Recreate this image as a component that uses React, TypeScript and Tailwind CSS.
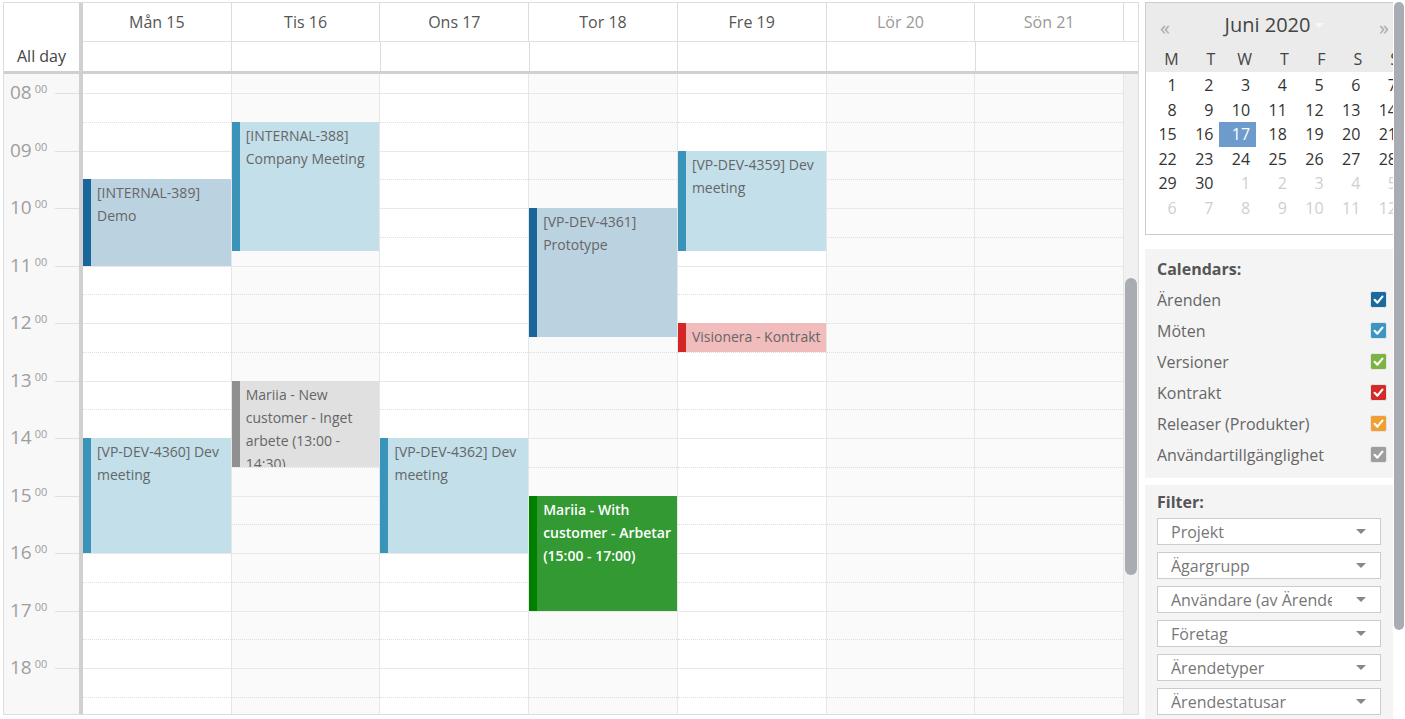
import React from 'react';

type Kind = 'arende' | 'mote' | 'kontrakt' | 'tillg' | 'arbete';

interface CalEvent {
    start: number;
    end: number;
    kind: Kind;
    title: string;
}

interface Day {
    label: string;
    shade: boolean;
    weekend: boolean;
    events: CalEvent[];
}

// px per hour and the offset of 08:00 inside the scrolled body
const HOUR = 57.5;
const ORIGIN = 19;

const kindStyle: Record<Kind, string> = {
    arende: 'bg-[#bbd2e0] border-[#19679a] text-[#666]',
    mote: 'bg-[#c2dfea] border-[#3a94b9] text-[#666]',
    kontrakt: 'bg-[#f1bcbc] border-[#d42626] text-[#666]',
    tillg: 'bg-[#e0e0e0] border-[#909090] text-[#666]',
    arbete: 'bg-[#339933] border-[#008000] text-white font-semibold',
};

const days: Day[] = [
    {
        label: 'Mån 15', shade: false, weekend: false, events: [
            { start: 9.5, end: 11, kind: 'arende', title: '[INTERNAL-389] Demo' },
            { start: 14, end: 16, kind: 'mote', title: '[VP-DEV-4360] Dev meeting' },
        ],
    },
    {
        label: 'Tis 16', shade: true, weekend: false, events: [
            { start: 8.5, end: 10.75, kind: 'mote', title: '[INTERNAL-388] Company Meeting' },
            { start: 13, end: 14.5, kind: 'tillg', title: 'Mariia - New customer - Inget arbete (13:00 - 14:30)' },
        ],
    },
    {
        label: 'Ons 17', shade: false, weekend: false, events: [
            { start: 14, end: 16, kind: 'mote', title: '[VP-DEV-4362] Dev meeting' },
        ],
    },
    {
        label: 'Tor 18', shade: true, weekend: false, events: [
            { start: 10, end: 12.25, kind: 'arende', title: '[VP-DEV-4361] Prototype' },
            { start: 15, end: 17, kind: 'arbete', title: 'Mariia - With customer - Arbetar (15:00 - 17:00)' },
        ],
    },
    {
        label: 'Fre 19', shade: false, weekend: false, events: [
            { start: 9, end: 10.75, kind: 'mote', title: '[VP-DEV-4359] Dev meeting' },
            { start: 12, end: 12.5, kind: 'kontrakt', title: 'Visionera - Kontrakt' },
        ],
    },
    { label: 'Lör 20', shade: true, weekend: true, events: [] },
    { label: 'Sön 21', shade: true, weekend: true, events: [] },
];

// half-hour slots starting 07:30, enough to fill the visible body
const slots = Array.from({ length: 23 }, (_, i) => 7.5 + i * 0.5);

function SlotLines() {
    return (
        <div className="mt-[-9.75px]">
            {slots.map((t) => (
                <div
                    key={t}
                    className={`h-[28.75px] border-t ${Number.isInteger(t) ? 'border-solid border-[#e8e8e8]' : 'border-dotted border-[#dedede]'}`}
                />
            ))}
        </div>
    );
}

function DayColumn({ day }: { day: Day }) {
    return (
        <div className={`relative flex-1 overflow-hidden border-r border-[#e6e6e6] ${day.shade ? 'bg-[#fafafa]' : 'bg-white'}`}>
            <SlotLines />
            {day.events.map((ev) => (
                <div
                    key={ev.title}
                    className={`absolute left-0 right-0 overflow-hidden border-l-8 pl-[6px] pr-[2px] pt-[2px] text-[14px] leading-[23px] ${kindStyle[ev.kind]}`}
                    style={{ top: ORIGIN + (ev.start - 8) * HOUR, height: (ev.end - ev.start) * HOUR }}
                >
                    {ev.title}
                </div>
            ))}
        </div>
    );
}

function TimeGutter() {
    return (
        <div className="w-[79px] shrink-0 overflow-hidden border-r-4 border-[#d0d0d0] bg-[#f8f8f8]">
            <div className="mt-[-9.75px]">
                {slots.map((t) => (
                    <div key={t} className="relative h-[28.75px]">
                        {Number.isInteger(t) && (
                            <>
                                <div className="ml-[51px] border-t border-[#e0e0e0]" />
                                <div className="absolute left-[6px] top-[-12px] flex items-start text-[#9e9e9e]">
                                    <span className="text-[19px] leading-[22px]">{String(t).padStart(2, '0')}</span>
                                    <span className="ml-[3px] mt-[1px] text-[11px] leading-[14px]">00</span>
                                </div>
                            </>
                        )}
                    </div>
                ))}
            </div>
        </div>
    );
}

function WeekCalendar() {
    return (
        <div className="ml-[3px] mt-[2px] flex h-[713px] w-[1136px] shrink-0 flex-col border border-[#dddddd] bg-white">
            <div className="flex border-b-[3px] border-[#d0d0d0]">
                <div className="flex h-[68px] w-[79px] shrink-0 items-end justify-center border-r-4 border-[#d0d0d0] pb-[3px] text-[16px] leading-[24px] text-[#444]">
                    All day
                </div>
                <div className="flex flex-1 flex-col">
                    <div className="flex h-[39px] border-b border-[#e0e0e0]">
                        {days.map((d) => (
                            <div
                                key={d.label}
                                className={`flex flex-1 items-center justify-center border-r border-[#dddddd] text-[16px] ${d.weekend ? 'text-[#999]' : 'text-[#555]'}`}
                            >
                                {d.label}
                            </div>
                        ))}
                        <div className="w-[14px]" />
                    </div>
                    <div className="flex h-[29px]">
                        {days.map((d, i) => (
                            <div key={d.label} className={`flex-1 ${i < days.length - 1 ? 'border-r border-[#dddddd]' : ''}`} />
                        ))}
                        <div className="w-[14px]" />
                    </div>
                </div>
            </div>
            <div className="flex min-h-0 flex-1 overflow-hidden">
                <TimeGutter />
                <div className="flex flex-1">
                    {days.map((d) => (
                        <DayColumn key={d.label} day={d} />
                    ))}
                </div>
                <div className="w-[14px] shrink-0 bg-[#f1f1f1]">
                    <div className="ml-[1px] mt-[204px] h-[297px] w-[12px] rounded-full bg-[#a9adb3]" />
                </div>
            </div>
        </div>
    );
}

const weekdays = ['M', 'T', 'W', 'T', 'F', 'S', 'S'];
const monthRows: { n: number; out?: boolean }[][] = [
    [1, 2, 3, 4, 5, 6, 7].map((n) => ({ n })),
    [8, 9, 10, 11, 12, 13, 14].map((n) => ({ n })),
    [15, 16, 17, 18, 19, 20, 21].map((n) => ({ n })),
    [22, 23, 24, 25, 26, 27, 28].map((n) => ({ n })),
    [{ n: 29 }, { n: 30 }, ...[1, 2, 3, 4, 5].map((n) => ({ n, out: true }))],
    [6, 7, 8, 9, 10, 11, 12].map((n) => ({ n, out: true })),
];

function MiniCalendar() {
    return (
        <div className="w-[259px] border border-[#cccccc] bg-white">
            <div className="bg-[#ebebeb]">
                <div className="flex h-[42px] items-center justify-between px-[14px]">
                    <span className="mt-[8px] text-[20px] leading-none text-[#aaa]">«</span>
                    <span className="mt-[2px] flex items-center text-[20px] text-[#444]">
                        Juni 2020
                        <span className="ml-[4px] h-0 w-0 border-x-[5px] border-t-[5px] border-x-transparent border-t-[#f6f6f6]" />
                    </span>
                    <span className="mt-[8px] text-[20px] leading-none text-[#aaa]">»</span>
                </div>
                <div className="grid h-[27px] grid-cols-7 items-center text-[16px] text-[#444]">
                    {weekdays.map((w, i) => (
                        <span key={i} className="pr-[4px] text-right">{w}</span>
                    ))}
                </div>
            </div>
            <div className="pb-[14px] pt-[1px]">
                {monthRows.map((row, r) => (
                    <div key={r} className="grid h-[24.5px] grid-cols-7">
                        {row.map((c, i) => {
                            const sel = !c.out && c.n === 17;
                            return (
                                <span
                                    key={i}
                                    className={`flex items-center justify-end pr-[6px] text-[16px] ${sel ? 'bg-[#6d9bcb] text-white' : c.out ? 'text-[#cfcfcf]' : 'text-[#333]'}`}
                                >
                                    {c.n}
                                </span>
                            );
                        })}
                    </div>
                ))}
            </div>
        </div>
    );
}

function Check({ color }: { color: string }) {
    return (
        <svg width="17" height="17" viewBox="0 0 17 17" className="mt-[6px] shrink-0">
            <rect x="0.5" y="0.5" width="16" height="16" rx="2" fill={color} stroke="#e6e6e6" strokeWidth="1" />
            <path d="M4.6 8.8 L7.4 11.6 L12.4 5.6" fill="none" stroke="white" strokeWidth="2.2" strokeLinecap="round" strokeLinejoin="round" />
        </svg>
    );
}

const calendars = [
    { name: 'Ärenden', color: '#1a6aa0' },
    { name: 'Möten', color: '#3b97c2' },
    { name: 'Versioner', color: '#7cb342' },
    { name: 'Kontrakt', color: '#d32a2a' },
    { name: 'Releaser (Produkter)', color: '#f0a030' },
    { name: 'Användartillgänglighet', color: '#9e9e9e' },
];

const filters = ['Projekt', 'Ägargrupp', 'Användare (av Ärendehanterare)', 'Företag', 'Ärendetyper', 'Ärendestatusar'];

function Sidebar() {
    return (
        <div className="ml-[6px] h-full w-[248px] shrink-0 overflow-hidden pt-[2px]">
            <MiniCalendar />
            <div className="mt-[14px] bg-[#f4f4f4] pb-[7.5px] pl-[12px] pr-[6px] pt-[8px]">
                <div className="text-[16px] font-bold leading-[24px] text-[#555]">Calendars:</div>
                <div className="mt-[3.5px]">
                    {calendars.map((c) => (
                        <div key={c.name} className="flex h-[31px] items-start justify-between">
                            <span className="text-[16px] leading-[31px] text-[#666]">{c.name}</span>
                            <Check color={c.color} />
                        </div>
                    ))}
                </div>
            </div>
            <div className="mt-[7px] h-[300px] bg-[#f4f4f4] pl-[12px] pt-[5px]">
                <div className="text-[16px] font-bold leading-[24px] text-[#555]">Filter:</div>
                <div className="mt-[4px] flex flex-col gap-[7px]">
                    {filters.map((f) => (
                        <div key={f} className="flex h-[27px] w-[224px] items-center border border-[#cccccc] bg-white pl-[13px] pr-[14px]">
                            <span className="mr-[24px] flex-1 overflow-hidden whitespace-nowrap text-[16px] leading-[24px] text-[#777]">{f}</span>
                            <span className="h-0 w-0 border-x-[5px] border-t-[5px] border-x-transparent border-t-[#888]" />
                        </div>
                    ))}
                </div>
            </div>
        </div>
    );
}

export default function App() {
    return (
        <div className="flex h-[719px] w-[1405px] overflow-hidden bg-white font-['Open_Sans',sans-serif]">
            <WeekCalendar />
            <Sidebar />
            <div className="h-full w-[12px] shrink-0">
                <div className="ml-[1px] mt-[2px] h-[628px] w-[10px] rounded-full bg-[#a9adb3]" />
            </div>
        </div>
    );
}
